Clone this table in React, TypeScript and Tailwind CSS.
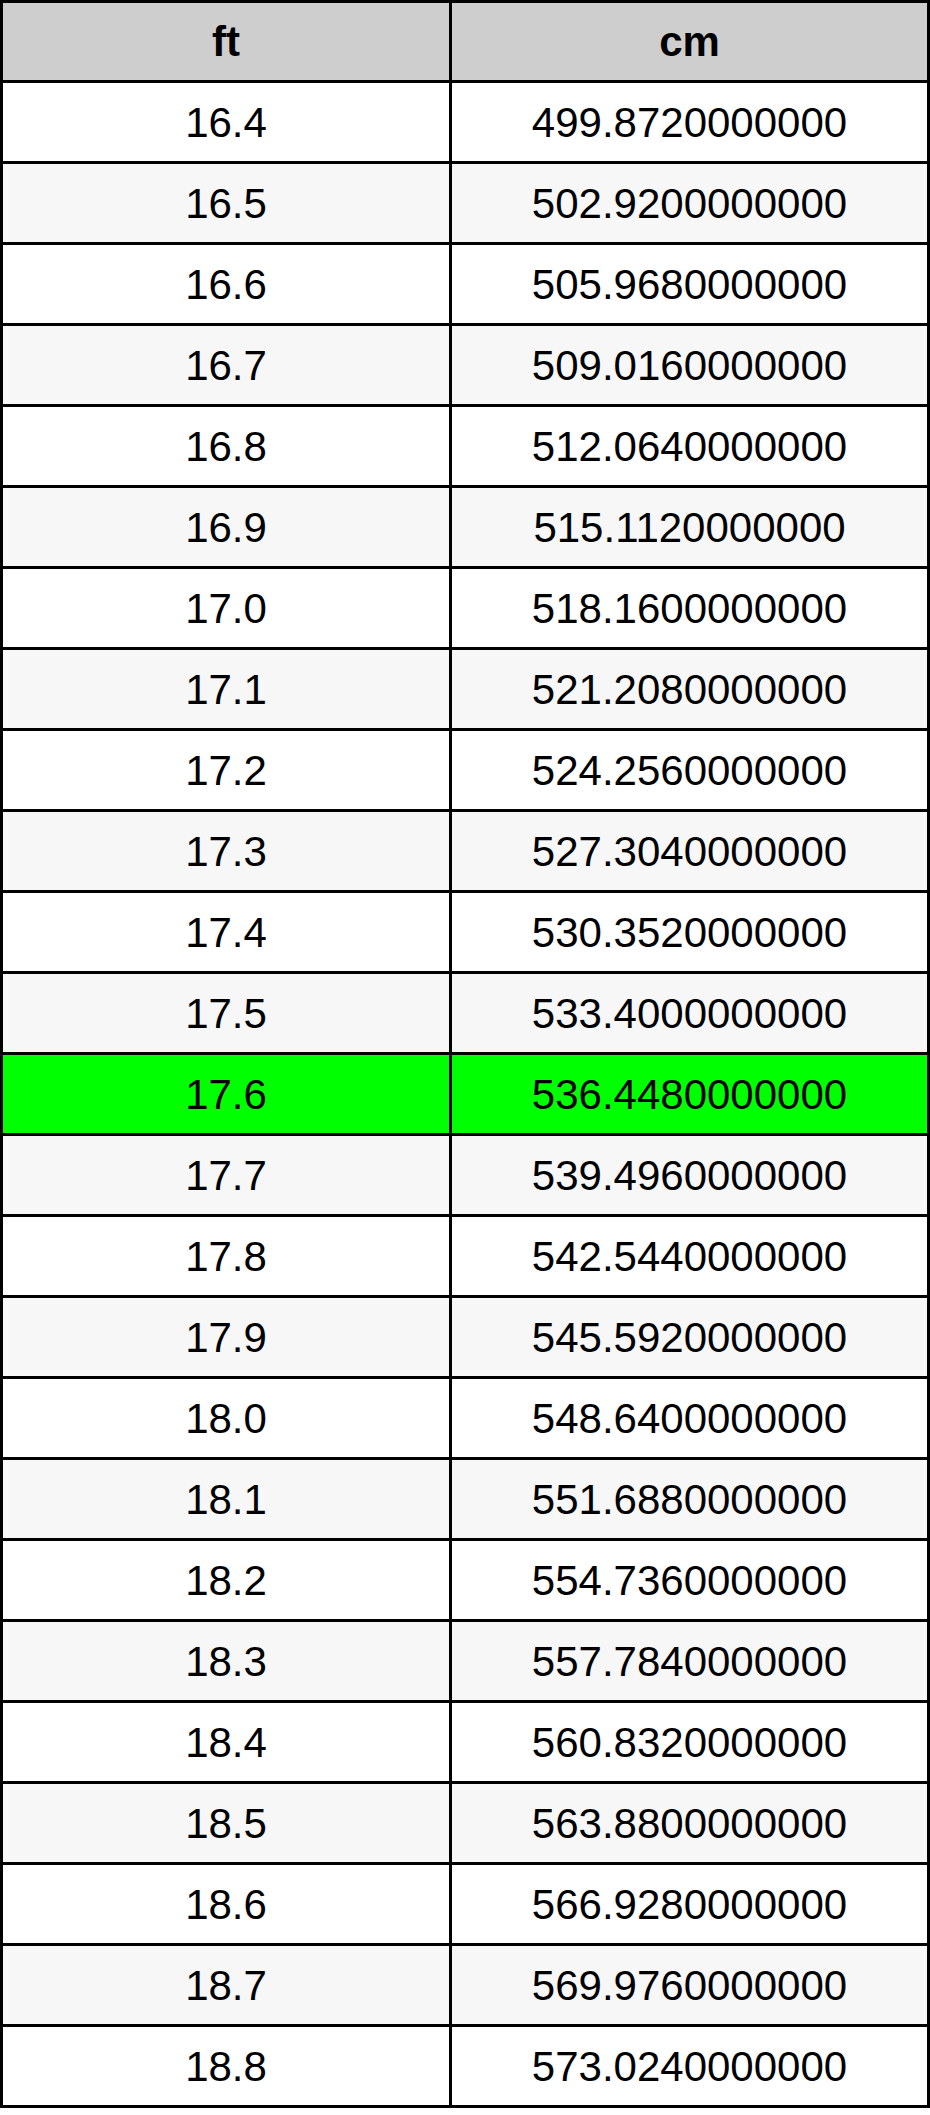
import React from "react";

const rows: [string, string][] = [
  ["16.4", "499.8720000000"],
  ["16.5", "502.9200000000"],
  ["16.6", "505.9680000000"],
  ["16.7", "509.0160000000"],
  ["16.8", "512.0640000000"],
  ["16.9", "515.1120000000"],
  ["17.0", "518.1600000000"],
  ["17.1", "521.2080000000"],
  ["17.2", "524.2560000000"],
  ["17.3", "527.3040000000"],
  ["17.4", "530.3520000000"],
  ["17.5", "533.4000000000"],
  ["17.6", "536.4480000000"],
  ["17.7", "539.4960000000"],
  ["17.8", "542.5440000000"],
  ["17.9", "545.5920000000"],
  ["18.0", "548.6400000000"],
  ["18.1", "551.6880000000"],
  ["18.2", "554.7360000000"],
  ["18.3", "557.7840000000"],
  ["18.4", "560.8320000000"],
  ["18.5", "563.8800000000"],
  ["18.6", "566.9280000000"],
  ["18.7", "569.9760000000"],
  ["18.8", "573.0240000000"],
];

export default function App() {
  return (
    <div className="w-[930px] bg-white" style={{ fontFamily: '"Liberation Sans", Arial, sans-serif' }}>
      <div className="grid grid-cols-[446px_475px] gap-[3px] p-[3px] bg-black text-[42px] text-black">
        <div className="h-[77px] bg-[#cecece] flex items-center justify-center font-bold">ft</div>
        <div className="h-[77px] bg-[#cecece] flex items-center justify-center font-bold">cm</div>
        {rows.map(([a, b], i) => {
          const bg = a === "17.6" ? "bg-[#00ff00]" : i % 2 === 0 ? "bg-white" : "bg-[#f7f7f7]";
          return (
            <React.Fragment key={a}>
              <div className={`h-[78px] ${bg} flex items-center justify-center`}>{a}</div>
              <div className={`h-[78px] ${bg} flex items-center justify-center`}>{b}</div>
            </React.Fragment>
          );
        })}
      </div>
    </div>
  );
}
